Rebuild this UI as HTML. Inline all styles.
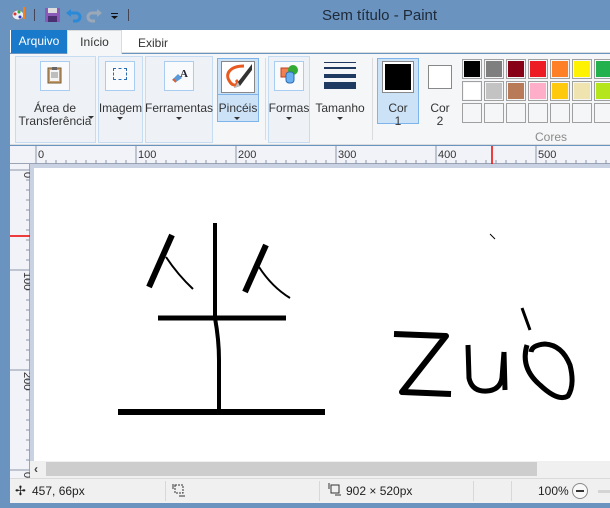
<!DOCTYPE html>
<html><head><meta charset="utf-8"><style>
*{margin:0;padding:0;box-sizing:border-box}
body{width:610px;height:508px;overflow:hidden;background:#6b93bf;font-family:"Liberation Sans","DejaVu Sans",sans-serif;position:relative}
.a{position:absolute}
.t{font-size:12px;color:#333;text-align:center;line-height:13px}
.grp{position:absolute;border:1px solid #c5dcf3;background:#eef2f7}
.btn{position:absolute;border:1px solid #a9cdf0;background:#f8fafc}
.arr{position:absolute;width:0;height:0;border-left:3px solid transparent;border-right:3px solid transparent;border-top:3px solid #333}
.c{position:absolute;width:20px;height:20px;border:1px solid #a0a0a0;padding:1px;background:#f5f6f7}
.c div{width:100%;height:100%}
</style></head><body>
<div class="a" style="left:0;top:0;width:610px;height:30px;background:#6b93bf"></div>
<svg class="a" style="left:10px;top:6px" width="130" height="20">
<ellipse cx="8" cy="9" rx="6" ry="5" fill="#e8eef5" stroke="#7a8aa0"/><circle cx="5" cy="8" r="1.5" fill="#d33"/><circle cx="9" cy="6" r="1.5" fill="#3a3"/><circle cx="10" cy="11" r="1.5" fill="#33c"/>
<rect x="13" y="1" width="2" height="12" fill="#f08020"/>
<rect x="24" y="3" width="1" height="12" fill="#445"/>
<rect x="35" y="2" width="15" height="14" fill="#8a5ab8"/><rect x="38" y="2" width="9" height="5" fill="#ddd"/><rect x="38" y="10" width="9" height="6" fill="#4a3070"/>
<path d="M58 7 h8 a4 4 0 0 1 0 8 h-3" stroke="#2a8ad8" stroke-width="3" fill="none"/><path d="M56 7 l5 -4 v8z" fill="#2a8ad8"/>
<path d="M90 7 h-8 a4 4 0 0 0 0 8 h3" stroke="#9aa8b8" stroke-width="3" fill="none"/><path d="M92 7 l-5 -4 v8z" fill="#9aa8b8"/>
<rect x="101" y="7" width="7" height="1" fill="#111"/><path d="M101 10 h7 l-3.5 3z" fill="#111"/>
<rect x="118" y="3" width="1" height="12" fill="#445"/>
</svg>
<div class="a" style="left:322px;top:7px;font-size:15px;color:#1e2a38">Sem título - Paint</div>
<div class="a" style="left:10px;top:30px;width:600px;height:23px;background:#fff;border-bottom:1px solid #dadbdc"></div>
<div class="a" style="left:11px;top:30px;width:56px;height:23px;background:#1979ca;color:#fff;font-size:12px;line-height:23px;text-align:center">Arquivo</div>
<div class="a" style="left:67px;top:30px;width:55px;height:24px;background:#f5f6f7;border:1px solid #dadbdc;border-bottom:none;font-size:12px;line-height:23px;text-align:center;color:#333">Início</div>
<div class="a" style="left:138px;top:36px;font-size:12px;color:#333">Exibir</div>
<div class="a" style="left:10px;top:54px;width:600px;height:91px;background:#f5f6f7;border-bottom:1px solid #dadbdc"></div>
<div class="grp" style="left:15px;top:56px;width:81px;height:87px"></div>
<div class="btn" style="left:40px;top:61px;width:30px;height:30px"></div>
<svg class="a" style="left:47px;top:66px" width="16" height="18"><rect x="1" y="2" width="13" height="15" fill="#c8a070" stroke="#7a5a30"/><rect x="3" y="4" width="9" height="11" fill="#f4f4f4"/><rect x="5" y="1" width="5" height="3" fill="#666"/><path d="M4 7h7M4 9h7M4 11h7" stroke="#888"/></svg>
<div class="a t" style="left:15px;top:97px;width:80px;top:102px">Área de<br>Transferência</div>
<div class="arr" style="left:88px;top:116px"></div>
<div class="grp" style="left:98px;top:56px;width:45px;height:87px"></div>
<div class="btn" style="left:105px;top:61px;width:30px;height:30px"></div>
<div class="a" style="left:113px;top:68px;width:14px;height:12px;border:1px dashed #2a6ab0"></div>
<div class="a t" style="left:98px;top:102px;width:45px">Imagem</div>
<div class="arr" style="left:117px;top:117px"></div>
<div class="grp" style="left:145px;top:56px;width:68px;height:87px"></div>
<div class="btn" style="left:164px;top:61px;width:30px;height:30px"></div>
<svg class="a" style="left:170px;top:66px" width="20" height="18"><path d="M2 14 l6 -6 l4 4 l-6 4z" fill="#5a9ad8"/><path d="M3 13 l3 3" stroke="#e06030" stroke-width="2"/><text x="10" y="11" font-size="11" font-weight="bold" fill="#223" font-family="Liberation Serif">A</text></svg>
<div class="a t" style="left:145px;top:102px;width:68px">Ferramentas</div>
<div class="arr" style="left:176px;top:117px"></div>
<div class="a" style="left:217px;top:58px;width:42px;height:64px;background:#cce2f7;border:1px solid #7eb4ea"></div>
<div class="a" style="left:221px;top:61px;width:34px;height:32px;background:#fff;border:1px solid #888"></div>
<svg class="a" style="left:222px;top:62px" width="32" height="30"><path d="M22 4 C8 4 2 12 8 20 C12 26 18 22 14 18" stroke="#e85a20" stroke-width="3" fill="none"/><path d="M30 2 L16 20 L12 26 L18 24 L30 8z" fill="#333"/><path d="M16 20 L12 26 L18 24z" fill="#bbb"/></svg>
<div class="a" style="left:217px;top:94px;width:42px;border-top:1px solid #7eb4ea"></div>
<div class="a t" style="left:217px;top:102px;width:42px">Pincéis</div>
<div class="arr" style="left:234px;top:117px"></div>
<div class="a" style="left:265px;top:58px;width:1px;height:82px;background:#dadbdc"></div>
<div class="grp" style="left:268px;top:56px;width:42px;height:87px"></div>
<div class="btn" style="left:274px;top:61px;width:30px;height:30px"></div>
<svg class="a" style="left:280px;top:64px" width="20" height="20"><rect x="1" y="4" width="10" height="9" fill="#f08050" stroke="#c04020"/><circle cx="13" cy="6" r="5" fill="#3a3" /><rect x="6" y="8" width="8" height="11" rx="3" fill="#6ab0f0" stroke="#2a6ab0"/></svg>
<div class="a t" style="left:268px;top:102px;width:42px">Formas</div>
<div class="arr" style="left:286px;top:117px"></div>
<div class="a" style="left:324px;top:62px;width:32px;height:1px;background:#1e3a60"></div>
<div class="a" style="left:324px;top:67px;width:32px;height:2px;background:#1e3a60"></div>
<div class="a" style="left:324px;top:74px;width:32px;height:4px;background:#1e3a60"></div>
<div class="a" style="left:324px;top:82px;width:32px;height:7px;background:#1e3a60"></div>
<div class="a t" style="left:313px;top:102px;width:54px">Tamanho</div>
<div class="arr" style="left:337px;top:117px"></div>
<div class="a" style="left:372px;top:58px;width:1px;height:82px;background:#dadbdc"></div>
<div class="a" style="left:377px;top:58px;width:42px;height:66px;background:#cce2f7;border:1px solid #7eb4ea"></div>
<div class="a" style="left:382px;top:61px;width:32px;height:32px;border:1px solid #888;background:#fff;padding:2px"><div style="width:100%;height:100%;background:#000"></div></div>
<div class="a t" style="left:377px;top:102px;width:42px">Cor<br>1</div>
<div class="a" style="left:428px;top:65px;width:24px;height:24px;border:1px solid #888;background:#fff"></div>
<div class="a t" style="left:419px;top:102px;width:42px">Cor<br>2</div>
<div class="c" style="left:462px;top:59px"><div style="background:#000"></div></div>
<div class="c" style="left:484px;top:59px"><div style="background:#7f7f7f"></div></div>
<div class="c" style="left:506px;top:59px"><div style="background:#880015"></div></div>
<div class="c" style="left:528px;top:59px"><div style="background:#ed1c24"></div></div>
<div class="c" style="left:550px;top:59px"><div style="background:#ff7f27"></div></div>
<div class="c" style="left:572px;top:59px"><div style="background:#fff200"></div></div>
<div class="c" style="left:594px;top:59px"><div style="background:#22b14c"></div></div>
<div class="c" style="left:462px;top:81px"><div style="background:#fff"></div></div>
<div class="c" style="left:484px;top:81px"><div style="background:#c3c3c3"></div></div>
<div class="c" style="left:506px;top:81px"><div style="background:#b97a57"></div></div>
<div class="c" style="left:528px;top:81px"><div style="background:#ffaec9"></div></div>
<div class="c" style="left:550px;top:81px"><div style="background:#ffc90e"></div></div>
<div class="c" style="left:572px;top:81px"><div style="background:#efe4b0"></div></div>
<div class="c" style="left:594px;top:81px"><div style="background:#b5e61d"></div></div>
<div class="c" style="left:462px;top:103px"></div><div class="c" style="left:484px;top:103px"></div><div class="c" style="left:506px;top:103px"></div><div class="c" style="left:528px;top:103px"></div><div class="c" style="left:550px;top:103px"></div><div class="c" style="left:572px;top:103px"></div><div class="c" style="left:594px;top:103px"></div>
<div class="a" style="left:535px;top:130px;font-size:12px;color:#8a8a8a">Cores</div>
<div class="a" style="left:10px;top:146px;width:600px;height:18px;background:#f1f3f9;border-bottom:1px solid #9aa4b4"></div>
<svg class="a" style="left:0;top:146px" width="610" height="18">
<g stroke="#8a96a8">
<path d="M36 0v18M136 0v18M236 0v18M336 0v18M436 0v18M536 0v18"/>
<path d="M46 14v4M56 14v4M66 14v4M76 14v4M86 14v4M96 14v4M106 14v4M116 14v4M126 14v4M146 14v4M156 14v4M166 14v4M176 14v4M186 14v4M196 14v4M206 14v4M216 14v4M226 14v4M246 14v4M256 14v4M266 14v4M276 14v4M286 14v4M296 14v4M306 14v4M316 14v4M326 14v4M346 14v4M356 14v4M366 14v4M376 14v4M386 14v4M396 14v4M406 14v4M416 14v4M426 14v4M446 14v4M456 14v4M466 14v4M476 14v4M486 14v4M496 14v4M506 14v4M516 14v4M526 14v4M546 14v4M556 14v4M566 14v4M576 14v4M586 14v4M596 14v4M606 14v4"/>
</g>
<path d="M492 0v18" stroke="#e00" stroke-width="1.5"/>
<g font-size="11" fill="#333" font-family="Liberation Sans"><text x="38" y="12">0</text><text x="138" y="12">100</text><text x="238" y="12">200</text><text x="338" y="12">300</text><text x="438" y="12">400</text><text x="538" y="12">500</text></g>
</svg>
<div class="a" style="left:10px;top:164px;width:20px;height:314px;background:#f1f3f9;border-right:1px solid #9aa4b4"></div>
<svg class="a" style="left:10px;top:164px" width="20" height="314">
<g stroke="#8a96a8"><path d="M0 6h20M0 106h20M0 206h20M0 306h20"/>
<path d="M16 16h4M16 26h4M16 36h4M16 46h4M16 56h4M16 66h4M16 76h4M16 86h4M16 96h4M16 116h4M16 126h4M16 136h4M16 146h4M16 156h4M16 166h4M16 176h4M16 186h4M16 196h4M16 216h4M16 226h4M16 236h4M16 246h4M16 256h4M16 266h4M16 276h4M16 286h4M16 296h4"/></g>
<path d="M0 72h20" stroke="#e00" stroke-width="1.5"/>
<g font-size="11" fill="#333" font-family="Liberation Sans"><text transform="translate(14,8) rotate(90)">0</text><text transform="translate(14,108) rotate(90)">100</text><text transform="translate(14,208) rotate(90)">200</text><text transform="translate(14,308) rotate(90)">0</text></g>
</svg>
<div class="a" style="left:30px;top:164px;width:580px;height:297px;background:#c8d2e2"></div>
<div class="a" style="left:34px;top:168px;width:576px;height:293px;background:#fff"></div>
<svg class="a" style="left:0;top:0" width="610" height="461" fill="none" stroke="#000" stroke-linecap="butt" stroke-linejoin="round">
<path d="M172 235 L149 287" stroke-width="6"/>
<path d="M166 257 Q178 275 193 289" stroke-width="2"/>
<path d="M266 245 L245 292" stroke-width="6"/>
<path d="M259 267 Q272 287 290 298" stroke-width="2"/>
<path d="M215 223 L215 318 Q219 340 219 360 L219 411" stroke-width="4"/>
<path d="M158 318 L286 318" stroke-width="5"/>
<path d="M118 412 L325 412" stroke-width="6"/>
<path d="M394 334 L446 336 L402 392 L451 394" stroke-width="6"/>
<path d="M468 345 L469 378 Q472 392 487 391 Q500 390 502 378 L504 352" stroke-width="5"/>
<path d="M504 352 L505 390" stroke-width="5"/>
<path d="M522 308 L530 330" stroke-width="3"/>
<path d="M527 345 Q520 368 540 385 Q558 402 568 396 Q575 385 570 365 Q562 345 545 344 Q532 345 531 352" stroke-width="5"/>
<path d="M490 234 L495 239" stroke-width="1"/>
</svg>
<div class="a" style="left:30px;top:461px;width:580px;height:17px;background:#f0f0f0"></div>
<div class="a" style="left:34px;top:462px;font-size:12px;color:#444;font-weight:bold">‹</div>
<div class="a" style="left:46px;top:462px;width:491px;height:14px;background:#cdcdcd"></div>
<div class="a" style="left:10px;top:478px;width:600px;height:25px;background:#f0f0f0;border-top:1px solid #dadada"></div>
<div class="a" style="left:15px;top:483px;font-size:13px;color:#222">✢</div>
<div class="a" style="left:32px;top:484px;font-size:12px;color:#222">457, 66px</div>
<div class="a" style="left:165px;top:481px;width:1px;height:20px;background:#d8d8d8"></div>
<svg class="a" style="left:171px;top:483px" width="16" height="14"><rect x="4" y="2" width="8" height="8" fill="none" stroke="#333" stroke-dasharray="2 1"/><path d="M2 1v5M8 13h6" stroke="#333"/></svg>
<div class="a" style="left:319px;top:481px;width:1px;height:20px;background:#d8d8d8"></div>
<svg class="a" style="left:327px;top:483px" width="16" height="14"><rect x="4" y="2" width="8" height="8" fill="none" stroke="#333"/><path d="M2 0v6M8 12h6" stroke="#333"/></svg>
<div class="a" style="left:346px;top:484px;font-size:12px;color:#222">902 × 520px</div>
<div class="a" style="left:473px;top:481px;width:1px;height:20px;background:#d8d8d8"></div>
<div class="a" style="left:511px;top:481px;width:1px;height:20px;background:#d8d8d8"></div>
<div class="a" style="left:538px;top:484px;font-size:12px;color:#222">100%</div>
<div class="a" style="left:572px;top:483px;width:16px;height:16px;border:1px solid #888;border-radius:50%;background:#f8f8f8"></div>
<div class="a" style="left:576px;top:490px;width:8px;height:2px;background:#333"></div>
<div class="a" style="left:598px;top:490px;width:12px;height:3px;background:#d4d4d4"></div>
</body></html>
